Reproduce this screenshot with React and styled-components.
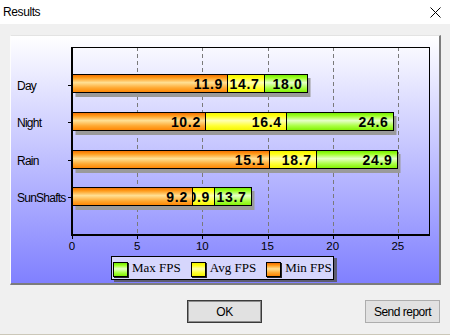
import React from 'react';
import styled, { createGlobalStyle } from 'styled-components';

const GlobalStyle = createGlobalStyle`
  html, body {
    margin: 0;
    padding: 0;
    background: #f0f0f0;
  }
  body {
    font-family: "Liberation Sans", Arial, sans-serif;
  }
`;

// series colours: stops from the top edge of a bar down to its bottom edge
const SERIES = {
  max: {
    label: 'Max FPS',
    stops: [[0, '#6ee800'], [0.18, '#9cff20'], [0.45, '#e6ffc8'], [0.75, '#a8ff40'], [1, '#80f000']],
  },
  avg: {
    label: 'Avg FPS',
    stops: [[0, '#f0f000'], [0.18, '#ffff10'], [0.45, '#ffffb0'], [0.75, '#ffff30'], [1, '#f4f400']],
  },
  min: {
    label: 'Min FPS',
    stops: [[0, '#f06c00'], [0.18, '#ff9a18'], [0.45, '#ffe094'], [0.75, '#ffa830'], [1, '#ff8400']],
  },
};

const cssGradient = (s) =>
  `linear-gradient(to bottom, ${s.stops.map(([o, c]) => `${c} ${o * 100}%`).join(', ')})`;

const rows = [
  { name: 'Day', min: 11.9, avg: 14.7, max: 18.0 },
  { name: 'Night', min: 10.2, avg: 16.4, max: 24.6 },
  { name: 'Rain', min: 15.1, avg: 18.7, max: 24.9 },
  { name: 'SunShafts', min: 9.2, avg: 10.9, max: 13.7 },
];

const Window = styled.div`
  width: 450px;
  height: 335px;
  box-sizing: border-box;
  background: #f0f0f0;
  border-bottom: 1px solid #cbc7b8;
  display: flex;
  flex-direction: column;
  overflow: hidden;
`;

const TitleBar = styled.div`
  height: 24px;
  flex: none;
  background: #fff;
  display: flex;
  align-items: center;
  justify-content: space-between;
  padding: 0 9px 0 3px;
`;

const Title = styled.span`
  font-size: 12px;
  letter-spacing: -0.4px;
  color: #000;
`;

const Body = styled.div`
  padding: 11px 9px 0 10px;
  display: flex;
  flex-direction: column;
`;

const ChartPanel = styled.div`
  width: 431px;
  height: 250px;
  box-sizing: border-box;
  border-top: 1px solid #e3e3e3;
  border-left: 1px solid #fdfdfd;
  border-right: 2px solid #7c7c7c;
  border-bottom: 2px solid #7c7c7c;
  background: linear-gradient(to bottom, #ffffff 0%, #8080ff 100%);
  display: flex;
  flex-direction: column;
`;

const Plot = styled.svg`
  display: block;
  flex: none;
`;

const Legend = styled.div`
  align-self: flex-start;
  margin: 3px 0 0 100px;
  height: 24px;
  box-sizing: border-box;
  display: flex;
  align-items: center;
  gap: 10px;
  padding: 0 1px 0 1px;
  background: #d6d6fc;
  border: 1px solid #000;
  box-shadow: 3px 2px 0 #5c5c72;
`;

const LegendItem = styled.div`
  display: flex;
  align-items: center;
  gap: 4px;
  font-family: "Liberation Serif", "Times New Roman", serif;
  font-size: 13px;
  color: #000;
`;

const Swatch = styled.span`
  width: 15px;
  height: 15px;
  margin-top: 3px;
  box-sizing: border-box;
  border: 1px solid #000;
  box-shadow: 1px 1px 0 #222;
  background: ${(p) => p.$fill};
`;

const ButtonRow = styled.div`
  margin-top: 15px;
  display: flex;
  justify-content: flex-end;
  gap: 103px;
  padding-right: 1px;
`;

const Button = styled.button`
  width: 75px;
  height: 23px;
  box-sizing: border-box;
  padding: 0;
  background: #e1e1e1;
  border: 1px solid ${(p) => (p.$primary ? '#3a3a3a' : '#adadad')};
  box-shadow: ${(p) => (p.$primary ? 'inset 0 0 0 1px #8c8c8c' : 'none')};
  font-family: "Liberation Sans", Arial, sans-serif;
  font-size: 12px;
  letter-spacing: -0.5px;
  color: #000;
`;

const CloseIcon = () => (
  <svg width="11" height="11" viewBox="0 0 11 11">
    <path d="M0.5 0.5 L10.5 10.5 M10.5 0.5 L0.5 10.5" stroke="#000" strokeWidth="1" fill="none" />
  </svg>
);

// chart geometry, in page pixels
const X0 = 72;
const X1 = 429;
const Y0 = 47;
const Y1 = 235;
const AXIS_MAX = 27.39;
const SLOT = (Y1 - Y0) / 5;
const BAR_H = 19;
const FONT = '"Liberation Sans", Arial, sans-serif';
const sx = (v) => X0 + (v * (X1 - X0)) / AXIS_MAX;
const px = (v) => Math.round(sx(v)) + 0.5;
const barTop = (i) => Math.round(Y0 + SLOT * (i + 1) - 10.3);
const segmentsOf = (r) => [['min', 0, r.min], ['avg', r.min, r.avg], ['max', r.avg, r.max]];

const BarChart = () => (
  <Plot width="428" height="217">
    <defs>
      {Object.entries(SERIES).map(([key, s]) => (
        <linearGradient key={key} id={`grad-${key}`} x1="0" y1="0" x2="0" y2="1">
          {s.stops.map(([o, c]) => (
            <stop key={o} offset={o} stopColor={c} />
          ))}
        </linearGradient>
      ))}
      {rows.map((r, i) =>
        segmentsOf(r).map(([key, a, b]) => (
          <clipPath key={`c-${i}-${key}`} id={`clip-${i}-${key}`}>
            <rect x={px(a) + 0.5} y={barTop(i)} width={px(b) - px(a) - 1} height={BAR_H} />
          </clipPath>
        ))
      )}
    </defs>
    <g transform="translate(-11 -36)">
      {[5, 10, 15, 20, 25].map((v) => (
        <line key={v} x1={px(v)} x2={px(v)} y1={Y0} y2={Y1} stroke="#7a7a7a" strokeDasharray="4 3" />
      ))}

      <rect x={X0 + 0.5} y={Y0 + 0.5} width={X1 - X0} height={Y1 - Y0} fill="none" stroke="#000" />
      <line x1={X0} x2={X0} y1={Y0} y2={Y1 + 1} stroke="#000" strokeWidth="2" />
      <line x1={X0 - 1} x2={X1 + 1} y1={Y1} y2={Y1} stroke="#000" strokeWidth="2" />

      {[0, 5, 10, 15, 20, 25].map((v) => (
        <g key={v}>
          <line x1={px(v)} x2={px(v)} y1={Y1} y2={Y1 + 4} stroke="#000" />
          <text x={sx(v)} y={250} textAnchor="middle" fontSize="11.5" fill="#000" fontFamily={FONT}>
            {v}
          </text>
        </g>
      ))}

      {rows.map((r, i) => {
        const yc = Math.round(Y0 + SLOT * (i + 1)) + 0.5;
        const top = barTop(i);
        return (
          <g key={r.name}>
            <line x1={X0 - 4} x2={X0} y1={yc} y2={yc} stroke="#000" />
            <text x={17} y={yc + 4} fontSize="12" letterSpacing="-0.75" fill="#000" fontFamily={FONT}>
              {r.name}
            </text>
            <rect x={px(0) + 3} y={top + 4} width={px(r.max) - px(0)} height={BAR_H} fill="#9a9a9a" />
            {segmentsOf(r).map(([key, a, b]) => (
              <g key={key}>
                <rect x={px(a)} y={top + 0.5} width={px(b) - px(a)} height={BAR_H - 1}
                  fill={`url(#grad-${key})`} stroke="#000" />
                <g clipPath={`url(#clip-${i}-${key})`}>
                  <text x={sx(b) - 4} y={top + BAR_H / 2 + 5} textAnchor="end" fontSize="14"
                    fontWeight="bold" letterSpacing="0.7" fill="#000" fontFamily={FONT}>
                    {r[key].toFixed(1)}
                  </text>
                </g>
              </g>
            ))}
          </g>
        );
      })}
    </g>
  </Plot>
);

const App = () => (
  <Window>
    <GlobalStyle />
    <TitleBar>
      <Title>Results</Title>
      <CloseIcon />
    </TitleBar>
    <Body>
      <ChartPanel>
        <BarChart />
        <Legend>
          {['max', 'avg', 'min'].map((key) => (
            <LegendItem key={key}>
              <Swatch $fill={cssGradient(SERIES[key])} />
              {SERIES[key].label}
            </LegendItem>
          ))}
        </Legend>
      </ChartPanel>
      <ButtonRow>
        <Button $primary>OK</Button>
        <Button>Send report</Button>
      </ButtonRow>
    </Body>
  </Window>
);

export default App;
